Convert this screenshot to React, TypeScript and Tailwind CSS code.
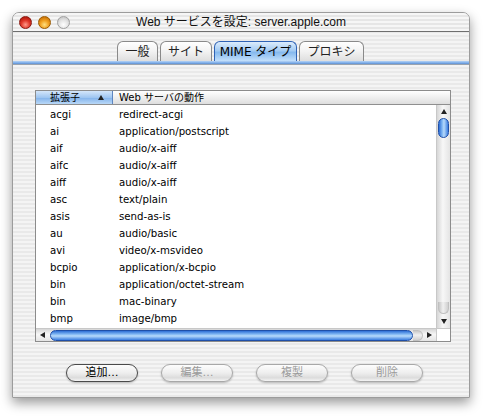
import React from "react";

const rows: [string, string][] = [
  ["acgi", "redirect-acgi"],
  ["ai", "application/postscript"],
  ["aif", "audio/x-aiff"],
  ["aifc", "audio/x-aiff"],
  ["aiff", "audio/x-aiff"],
  ["asc", "text/plain"],
  ["asis", "send-as-is"],
  ["au", "audio/basic"],
  ["avi", "video/x-msvideo"],
  ["bcpio", "application/x-bcpio"],
  ["bin", "application/octet-stream"],
  ["bin", "mac-binary"],
  ["bmp", "image/bmp"],
];

const font = "font-['DejaVu_Sans','Noto_Sans_CJK_JP',sans-serif]";

function Tri({ dir }: { dir: "up" | "down" | "left" | "right" }) {
  const pts =
    dir === "up"
      ? "3,0 6,5 0,5"
      : dir === "down"
      ? "0,0 6,0 3,5"
      : dir === "left"
      ? "0,3 5,0 5,6"
      : "0,0 5,3 0,6";
  const w = dir === "up" || dir === "down" ? 6 : 5;
  const h = dir === "up" || dir === "down" ? 5 : 6;
  return (
    <svg width={w} height={h} viewBox={`0 0 ${w} ${h}`}>
      <polygon points={pts} fill="#222" />
    </svg>
  );
}

function Tab({ label, active, w }: { label: string; active?: boolean; w: string }) {
  return (
    <div
      className={`${w} h-[20px] flex items-center justify-center rounded-t-[6px] border border-b-0 text-[12px] ${
        active
          ? "border-[#2f62b5] bg-[linear-gradient(to_bottom,#dcecfc,#a4cbf3_45%,#86b9ee_55%,#c3e0fb)] text-black"
          : "border-[#8a8a8a] bg-[linear-gradient(to_bottom,#ffffff,#f2f2f2_50%,#dedede)] text-[#222]"
      }`}
    >
      {label}
    </div>
  );
}

function Button({ label, disabled }: { label: string; disabled?: boolean }) {
  return (
    <div
      className={`w-[72px] h-[18px] rounded-full border flex items-center justify-center text-[11px] bg-[linear-gradient(to_bottom,#fdfdfd,#eeeeee_50%,#dcdcdc_80%,#f4f4f4)] shadow-[0_1px_2px_rgba(0,0,0,0.25)] ${
        disabled ? "border-[#a8a8a8] text-[#9a9a9a]" : "border-[#4a4a4a] text-black"
      }`}
    >
      {label}
    </div>
  );
}

export default function App() {
  return (
    <div className={`w-[483px] h-[417px] bg-white pl-[12px] pt-[12px] ${font}`}>
      <div className="w-[458px] h-[386px] rounded-t-[7px] border border-[#9c9c9c] shadow-[0_5px_12px_rgba(0,0,0,0.4)] overflow-hidden flex flex-col bg-[repeating-linear-gradient(to_bottom,#f4f4f4_0px,#f4f4f4_2px,#e9e9e9_2px,#e9e9e9_4px)]">
        {/* title bar */}
        <div className="h-[19px] border-b border-[#6f6f6f] grid grid-cols-[1fr_auto_1fr] items-center shrink-0 bg-[repeating-linear-gradient(to_bottom,#f6f6f6_0px,#f6f6f6_2px,#e6e6e6_2px,#e6e6e6_4px)]">
          <div className="flex items-center gap-[6px] pl-[6px]">
            <div className="w-[13px] h-[13px] rounded-full border border-[#8a1a12] bg-[radial-gradient(circle_at_50%_70%,#ff9a8a,#e0382a_45%,#a81408_90%)]" />
            <div className="w-[13px] h-[13px] rounded-full border border-[#9a5a00] bg-[radial-gradient(circle_at_50%_70%,#ffe080,#f0a020_45%,#c06800_90%)]" />
            <div className="w-[13px] h-[13px] rounded-full border border-[#a0a0a0] bg-[radial-gradient(circle_at_50%_70%,#ffffff,#e2e2e2_50%,#bdbdbd_95%)]" />
          </div>
          <div className="text-[12px] text-[#111] leading-none whitespace-nowrap font-['Liberation_Sans','Noto_Sans_CJK_JP',sans-serif]">
            Web サービスを設定: server.apple.com
          </div>
          <div />
        </div>

        {/* tabs */}
        <div className="mt-[9px] flex justify-center gap-[2px] pr-[1px] shrink-0">
          <Tab label="一般" w="w-[41px]" />
          <Tab label="サイト" w="w-[52px]" />
          <Tab label="MIME タイプ" w="w-[83px]" active />
          <Tab label="プロキシ" w="w-[65px]" />
        </div>
        <div className="h-[4px] shrink-0 bg-[linear-gradient(to_bottom,#b7d4f5,#7eaeea_60%,#5f8fd0)] border-b border-[#9aa3ae]" />

        {/* table */}
        <div className="ml-[22px] mt-[25px] w-[416px] h-[252px] border border-[#8c8c8c] bg-white flex flex-col shrink-0">
          <div className="h-[14px] border-b border-[#8f8f8f] flex shrink-0 text-[10px] leading-none">
            <div className="w-[77px] border-r border-[#5e86c0] flex items-center pl-[14px] pr-[8px] justify-between bg-[linear-gradient(to_bottom,#d4e6fa,#9fc6f1_50%,#86b5ec_55%,#b9d8f7)]">
              <span>拡張子</span>
              <Tri dir="up" />
            </div>
            <div className="flex-1 flex items-center pl-[6px] bg-[linear-gradient(to_bottom,#ffffff,#efefef_50%,#dedede)]">
              Web サーバの動作
            </div>
          </div>
          <div className="h-[223px] flex shrink-0">
            <div className="flex-1 pt-[1px] text-[10.2px] text-black">
              {rows.map(([ext, act], i) => (
                <div key={i} className="h-[17px] flex items-center">
                  <div className="w-[83px] pl-[14px]">{ext}</div>
                  <div>{act}</div>
                </div>
              ))}
            </div>
            {/* vertical scrollbar */}
            <div className="w-[14px] flex flex-col border-l border-[#c8c8c8] bg-[linear-gradient(to_right,#d6d6d6,#f7f7f7_45%,#e4e4e4)]">
              <div className="h-[13px] flex items-center justify-center">
                <Tri dir="up" />
              </div>
              <div className="h-[20px] mx-[1px] rounded-full border border-[#1f4fa8] bg-[linear-gradient(to_right,#2e6fd6,#7fb6f3_35%,#b7dafb_55%,#3a7de0)]" />
              <div className="flex-1" />
              <div className="h-[12px] mx-[1px] rounded-b-full bg-[linear-gradient(to_right,#c8c8c8,#f0f0f0_45%,#d0d0d0)] border border-t-0 border-[#c0c0c0]" />
              <div className="h-[14px] flex items-center justify-center">
                <Tri dir="down" />
              </div>
            </div>
          </div>
          {/* horizontal scrollbar */}
          <div className="flex-1 flex border-t border-[#c8c8c8]">
            <div className="flex-1 flex items-center bg-[linear-gradient(to_bottom,#d6d6d6,#f7f7f7_45%,#e4e4e4)]">
              <div className="w-[12px] flex items-center justify-center">
                <Tri dir="left" />
              </div>
              <div className="ml-[2px] w-[363px] h-[11px] rounded-full border border-[#1f4fa8] bg-[linear-gradient(to_bottom,#2e6fd6,#7fb6f3_35%,#b7dafb_55%,#3a7de0)]" />
              <div className="w-[10px] h-[11px] rounded-r-full bg-[linear-gradient(to_bottom,#c8c8c8,#f0f0f0_45%,#d0d0d0)] border border-l-0 border-[#c0c0c0]" />
              <div className="flex-1 flex items-center justify-center">
                <Tri dir="right" />
              </div>
            </div>
            <div className="w-[14px] bg-white border-l border-[#c8c8c8]" />
          </div>
        </div>

        {/* buttons */}
        <div className="mt-[22px] ml-[53px] flex gap-[23px]">
          <Button label="追加…" />
          <Button label="編集…" disabled />
          <Button label="複製" disabled />
          <Button label="削除" disabled />
        </div>
      </div>
    </div>
  );
}
